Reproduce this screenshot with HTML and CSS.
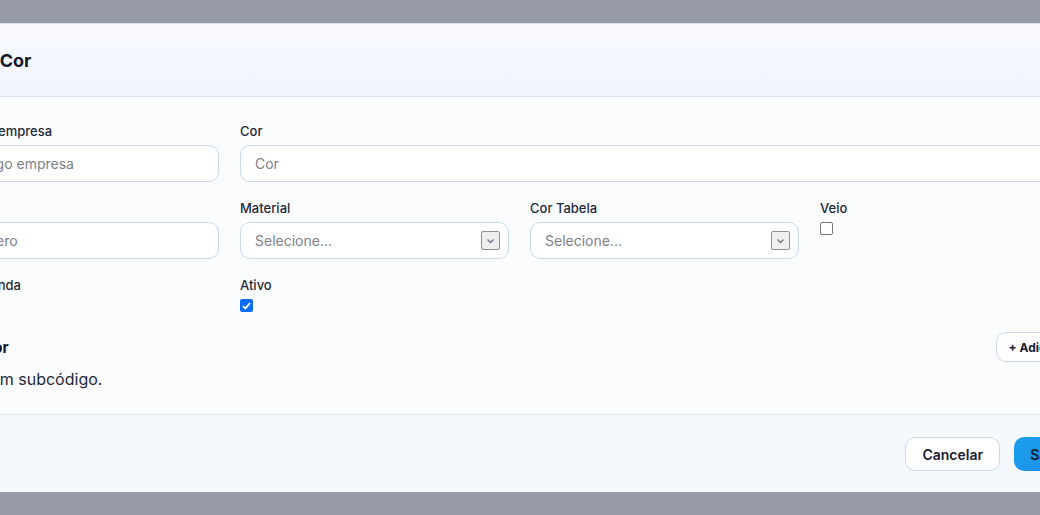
FILE: index.html
```html
<!DOCTYPE html>
<html lang="pt-BR">
<head>
    <meta charset="UTF-8">
    <title>Nova Cor</title>
    <link rel="stylesheet" href="styles.css">
</head>
<body>
    <div class="modal">
        <div class="modal-header">
            <h2 class="modal-title">Nova Cor</h2>
        </div>
        <div class="modal-body">
            <div class="form-grid">
                <div class="field">
                    <label>Código empresa</label>
                    <input class="input" type="text" placeholder="Código empresa">
                </div>
                <div class="field span-3">
                    <label>Cor</label>
                    <input class="input" type="text" placeholder="Cor">
                </div>

                <div class="field">
                    <label>Número</label>
                    <input class="input" type="text" placeholder="Número">
                </div>
                <div class="field">
                    <label>Material</label>
                    <div class="select">
                        <span class="select-text">Selecione...</span>
                        <span class="select-arrow">
                            <svg width="9" height="6" viewBox="0 0 9 6"><path d="M1.5 1.5 L4.5 4.5 L7.5 1.5" fill="none" stroke="#6b7280" stroke-width="1.3"/></svg>
                        </span>
                    </div>
                </div>
                <div class="field">
                    <label>Cor Tabela</label>
                    <div class="select">
                        <span class="select-text">Selecione...</span>
                        <span class="select-arrow">
                            <svg width="9" height="6" viewBox="0 0 9 6"><path d="M1.5 1.5 L4.5 4.5 L7.5 1.5" fill="none" stroke="#6b7280" stroke-width="1.3"/></svg>
                        </span>
                    </div>
                </div>
                <div class="field">
                    <label>Veio</label>
                    <span class="check"></span>
                </div>

                <div class="field">
                    <label>Para Venda</label>
                    <span class="check"></span>
                </div>
                <div class="field">
                    <label>Ativo</label>
                    <span class="check checked">
                        <svg width="9" height="8" viewBox="0 0 9 8"><path d="M1 4.2 L3.4 6.4 L8 1.2" fill="none" stroke="#fff" stroke-width="1.8"/></svg>
                    </span>
                </div>
            </div>

            <div class="section-head">
                <h3 class="section-title">Sub Cor</h3>
                <button class="btn btn-small">+ Adicionar</button>
            </div>
            <p class="empty">Nenhum subcódigo.</p>
        </div>
        <div class="modal-footer">
            <button class="btn">Cancelar</button>
            <button class="btn btn-primary">Salvar</button>
        </div>
    </div>
</body>
</html>
```

FILE: styles.css
```css
html,body{
    margin:0;
    padding:0;
}
body{
    width:1040px;
    height:515px;
    overflow:hidden;
    background:#979ba7;
    font-family:Inter,"Liberation Sans",sans-serif;
    color:#172033;
}
.modal{
    width:1187px;
    margin:23px 0 0 -74px;
    background:#fbfcfe;
    border-top:1px solid #d3def0;
}
.modal-header{
    height:72px;
    display:flex;
    align-items:center;
    padding:0 24px;
    background:linear-gradient(#f8faff,#f0f4fd);
    border-bottom:1px solid #d6e3f5;
}
.modal-title{
    margin:0;
    font-size:18px;
    font-weight:700;
    color:#111827;
}
.modal-body{
    padding:25px 24px 24px;
}
.form-grid{
    display:grid;
    grid-template-columns:repeat(4,269px);
    column-gap:21px;
    row-gap:17px;
}
.span-3{
    grid-column:span 3;
}
.field{
    display:flex;
    flex-direction:column;
    align-items:flex-start;
}
.field label{
    font-size:13px;
    line-height:18px;
    font-weight:500;
    color:#1f2937;
    margin-bottom:5px;
}
.input,.select{
    box-sizing:border-box;
    width:100%;
    height:37px;
    border:1px solid #c8d7ec;
    border-radius:10px;
    background:#fff;
    padding:0 14px;
    font-family:inherit;
    font-size:14px;
    color:#1f2937;
    outline:none;
}
.input::placeholder{
    color:#7c818b;
}
.select{
    display:flex;
    align-items:center;
    justify-content:space-between;
    padding:0 8px 0 14px;
}
.select-text{
    color:#7c818b;
}
.select-arrow{
    box-sizing:border-box;
    width:19px;
    height:19px;
    border:1px solid #8d8f94;
    border-radius:2px;
    background:#efefef;
    display:flex;
    align-items:center;
    justify-content:center;
}
.check{
    box-sizing:border-box;
    width:13px;
    height:13px;
    border:1px solid #767676;
    border-radius:2px;
    background:#fff;
    display:flex;
    align-items:center;
    justify-content:center;
}
.check.checked{
    border:none;
    background:#0b6bf4;
}
.section-head{
    display:flex;
    align-items:center;
    justify-content:space-between;
    margin-top:20px;
}
.section-title{
    margin:0;
    font-size:15px;
    font-weight:700;
    color:#111827;
}
.empty{
    margin:6px 0 0;
    font-size:16px;
    line-height:22px;
    color:#1f2937;
}
.btn{
    box-sizing:border-box;
    height:34px;
    padding:0 16px;
    border:1px solid #cdd9ea;
    border-radius:10px;
    background:#fff;
    font-family:inherit;
    font-size:14px;
    font-weight:600;
    color:#172033;
}
.btn-small{
    height:30px;
    padding:0 12px;
    font-size:12px;
    font-weight:700;
}
.btn-primary{
    border:none;
    width:75px;
    background:linear-gradient(135deg,#1aa3ec,#1f7fe8);
    color:#111827;
}
.modal-footer{
    display:flex;
    justify-content:flex-end;
    gap:14px;
    padding:22px 24px 21px;
    background:#f5f8fd;
    border-top:1px solid #dbe4f0;
}
```
